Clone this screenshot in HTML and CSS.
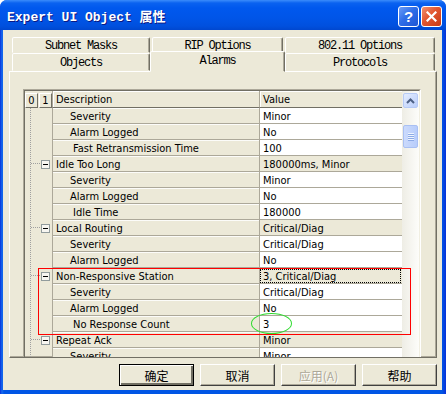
FILE: index.html
```html
<!DOCTYPE html>
<html lang="zh-CN">
<head>
  <meta charset="UTF-8">
  <title>Expert UI Object 属性</title>
  <link rel="stylesheet" href="styles.css">
</head>
<body>
  <div class="window">
    <div class="titlebar">
      <span class="title">Expert UI Object 属性</span>
      <div class="caption">
        <span class="cap-btn help">?</span>
        <span class="cap-btn close">
          <svg width="11" height="11" viewBox="0 0 11 11"><path d="M1.5 1.5 L9.5 9.5 M9.5 1.5 L1.5 9.5" stroke="#fff" stroke-width="2.2" stroke-linecap="square"/></svg>
        </span>
      </div>
    </div>
    <div class="client">
      <div class="tabs">
        <div class="tab-row back">
          <div class="tab w1">Subnet Masks</div>
          <div class="tab w2">RIP Options</div>
          <div class="tab w3">802.11 Options</div>
        </div>
        <div class="tab-row front">
          <div class="tab w1">Objects</div>
          <div class="tab active">Alarms</div>
          <div class="tab w3">Protocols</div>
        </div>
      </div>
      <div class="panel">
        <div class="grid">
          <div class="grid-body">
            <div class="rows">
              <div class="row head">
                <div class="tree"><span class="lvl">0</span><span class="lvl">1</span></div>
                <div class="desc">Description</div>
                <div class="val">Value</div>
              </div>
              <div class="row"><div class="tree"></div><div class="desc sub">Severity</div><div class="val">Minor</div></div>
              <div class="row"><div class="tree"></div><div class="desc sub">Alarm Logged</div><div class="val">No</div></div>
              <div class="row"><div class="tree"></div><div class="desc sub3">Fast Retransmission Time</div><div class="val">100</div></div>
              <div class="row group"><div class="tree"><span class="minus"></span></div><div class="desc">Idle Too Long</div><div class="val">180000ms, Minor</div></div>
              <div class="row"><div class="tree"></div><div class="desc sub">Severity</div><div class="val">Minor</div></div>
              <div class="row"><div class="tree"></div><div class="desc sub">Alarm Logged</div><div class="val">No</div></div>
              <div class="row"><div class="tree"></div><div class="desc sub3">Idle Time</div><div class="val">180000</div></div>
              <div class="row group"><div class="tree"><span class="minus"></span></div><div class="desc">Local Routing</div><div class="val">Critical/Diag</div></div>
              <div class="row"><div class="tree"></div><div class="desc sub">Severity</div><div class="val">Critical/Diag</div></div>
              <div class="row"><div class="tree"></div><div class="desc sub">Alarm Logged</div><div class="val">No</div></div>
              <div class="row group"><div class="tree"><span class="minus"></span></div><div class="desc">Non-Responsive Station</div><div class="val focus">3, Critical/Diag</div></div>
              <div class="row"><div class="tree"></div><div class="desc sub">Severity</div><div class="val">Critical/Diag</div></div>
              <div class="row"><div class="tree"></div><div class="desc sub">Alarm Logged</div><div class="val">No</div></div>
              <div class="row"><div class="tree"></div><div class="desc sub3">No Response Count</div><div class="val">3</div></div>
              <div class="row group"><div class="tree"><span class="minus"></span></div><div class="desc">Repeat Ack</div><div class="val">Minor</div></div>
              <div class="row"><div class="tree"></div><div class="desc sub">Severity</div><div class="val">Minor</div></div>
            </div>
            <div class="scrollbar">
              <div class="sb-btn">
                <svg width="9" height="6" viewBox="0 0 9 6"><path d="M1 5 L4.5 1.5 L8 5" fill="none" stroke="#4d6185" stroke-width="2"/></svg>
              </div>
              <div class="sb-thumb"><i></i><i></i><i></i><i></i></div>
            </div>
          </div>
          <div class="mark-box"></div>
          <div class="mark-ring"></div>
        </div>
      </div>
      <div class="buttons">
        <button class="btn default">确定</button>
        <button class="btn">取消</button>
        <button class="btn" disabled>应用(A)</button>
        <button class="btn">帮助</button>
      </div>
    </div>
  </div>
</body>
</html>
```

FILE: styles.css
```css
* { margin: 0; padding: 0; box-sizing: border-box; }
body {
  width: 446px;
  height: 394px;
  overflow: hidden;
  background: #fff;
  font-family: "DejaVu Sans", "Liberation Sans", sans-serif;
  font-stretch: condensed;
  font-size: 11px;
  color: #000;
}
.window {
  width: 446px;
  height: 394px;
  display: flex;
  flex-direction: column;
  background: linear-gradient(to right, #0831d9 0, #166aee 2px, #0055e5 4px, #0055e5 calc(100% - 4px), #0831d9 100%);
  border-radius: 7px 7px 0 0;
  overflow: hidden;
}
.titlebar {
  height: 30px;
  flex: none;
  display: flex;
  align-items: center;
  justify-content: space-between;
  padding: 0 4px 0 7px;
  background: linear-gradient(to bottom, #3b8cfb 0, #0a62f0 3px, #0058ee 8px, #0055e8 18px, #0050de 26px, #0047cf 30px);
}
.title {
  font-family: "Liberation Mono", "Noto Sans CJK SC", monospace;
  font-stretch: normal;
  font-weight: bold;
  font-size: 13px;
  color: #fff;
  text-shadow: 1px 1px #0a1883;
  padding-top: 1px;
}
.caption {
  display: flex;
  gap: 2px;
  margin-top: 2px;
}
.cap-btn {
  width: 21px;
  height: 21px;
  border: 1px solid #fff;
  border-radius: 3px;
  display: flex;
  align-items: center;
  justify-content: center;
  color: #fff;
}
.help {
  background: linear-gradient(135deg, #6a9cf6 0, #2f6ee8 45%, #1d55d4 100%);
  font: bold 15px "Liberation Sans", Arial, sans-serif;
}
.close {
  background: linear-gradient(135deg, #f09070 0, #e2552f 45%, #c73a14 100%);
}
.client {
  flex: 1;
  margin: 0 4px 4px 3px;
  background: #ece9d8;
  padding: 7px 5px 0 6px;
  display: flex;
  flex-direction: column;
}
.tabs {
  padding-left: 3px;
  font-family: "Liberation Mono", "DejaVu Sans Mono", monospace;
  font-stretch: normal;
  font-size: 12px;
  letter-spacing: -1.2px;
}
.tab-row { display: flex; }
.tab {
  background: #ece9d8;
  border: 1px solid;
  border-color: #fff #716f64 transparent #fff;
  box-shadow: inset -1px 0 #aca899;
  border-radius: 2px 2px 0 0;
  display: flex;
  align-items: center;
  justify-content: center;
}
.back .tab { height: 16px; margin-right: 2px; padding-top: 2px; }
.front .tab { height: 18px; padding-top: 1px; }
.w1 { width: 138px; }
.w2 { width: 131px; }
.w3 { width: 150px; }
.back .w3 { margin-right: 0; }
.front .tab.active {
  width: 135px;
  height: 21px;
  margin-top: -2px;
  margin-bottom: -1px;
  padding: 0 0 1px;
  position: relative;
  z-index: 1;
}
.panel {
  height: 287px;
  flex: none;
  border: 1px solid;
  border-color: #fff #716f64 #716f64 #fff;
  box-shadow: inset -1px -1px #aca899;
  padding: 17px 15px 0 13px;
  overflow: hidden;
}
.grid {
  position: relative;
  width: 398px;
  height: 290px;
  border: 1px solid;
  border-color: #aca899 #fff #fff #aca899;
}
.grid-body {
  display: flex;
  height: 100%;
  border: 1px solid;
  border-color: #716f64 #f1efe2 #f1efe2 #716f64;
}
.rows { width: 377px; flex: none; }
.row {
  display: flex;
  height: 16px;
  line-height: 17px;
  white-space: nowrap;
}
.tree {
  width: 27px;
  flex: none;
  display: flex;
  align-items: center;
  background: repeating-linear-gradient(to bottom, #a0a0a0 0 1px, transparent 1px 2px) 5px 0 / 1px 100% no-repeat;
}
.group .tree {
  background:
    repeating-linear-gradient(to bottom, #a0a0a0 0 1px, transparent 1px 2px) 5px 0 / 1px 100% no-repeat,
    repeating-linear-gradient(to right, #a0a0a0 0 1px, transparent 1px 2px) 6px 7px / 10px 1px no-repeat;
}
.minus {
  width: 9px;
  height: 9px;
  margin-left: 16px;
  border: 1px solid #919b9c;
  background: linear-gradient(#000, #000) center / 5px 1px no-repeat, #f7f6f1;
}
.desc {
  width: 207px;
  flex: none;
  border-left: 1px solid #aca899;
  border-bottom: 1px solid #aca899;
  box-shadow: inset 0 1px #fcfcf9;
  padding-left: 3px;
  background: #ece9d8;
}
.desc.sub { padding-left: 17px; }
.desc.sub3 { padding-left: 20px; }
.val {
  width: 143px;
  flex: none;
  border-left: 1px solid #aca899;
  border-bottom: 1px solid #aca899;
  padding-left: 3px;
  background: #fff;
}
.group .val { background: #ece9d8; }
.val.focus { outline: 1px dotted #000; outline-offset: -2px; }
.head { height: 17px; line-height: 18px; }
.head .tree { background: none; padding-top: 1px; line-height: 14px; }
.lvl {
  width: 13px;
  height: 15px;
  text-align: center;
  border: 1px solid;
  border-color: #fff #716f64 #716f64 #fff;
  background: #ece9d8;
}
.lvl + .lvl { margin-left: 1px; }
.head .desc, .head .val {
  background: #ece9d8;
  box-shadow: inset 1px 1px #fff;
  border-bottom-color: #716f64;
}
.scrollbar {
  width: 17px;
  flex: none;
  background: linear-gradient(to right, #eeede5, #fdfdfa);
  padding: 2px 1px 0;
}
.sb-btn {
  height: 15px;
  border: 1px solid #b7cbf6;
  border-radius: 2px;
  background: linear-gradient(135deg, #e3ecff, #bccffa);
  display: flex;
  align-items: center;
  justify-content: center;
}
.sb-thumb {
  height: 23px;
  margin-top: 17px;
  border: 1px solid #a9c0f3;
  border-radius: 2px;
  background: linear-gradient(to right, #cbdafc, #b8cdfb);
  display: flex;
  flex-direction: column;
  justify-content: center;
  align-items: center;
  gap: 1px;
}
.sb-thumb i {
  display: block;
  width: 6px;
  height: 1px;
  background: #eef4fe;
  box-shadow: 0 1px #8caae6;
}
.mark-box {
  position: absolute;
  left: 14px;
  top: 178px;
  width: 373px;
  height: 67px;
  border: 1px solid #f00;
}
.mark-ring {
  position: absolute;
  left: 227px;
  top: 223px;
  width: 41px;
  height: 21px;
  border: 1px solid #2fdc2f;
  border-radius: 50%;
}
.buttons {
  display: flex;
  justify-content: flex-end;
  gap: 6px;
  margin-top: 6px;
}
.btn {
  width: 75px;
  height: 22px;
  background: #ece9d8;
  border: 1px solid;
  border-color: #fff #404040 #404040 #fff;
  box-shadow: inset -1px -1px #aca899;
  font-family: "Noto Sans CJK SC", sans-serif;
  font-size: 12px;
  color: #000;
}
.btn.default {
  border: 1px solid #000;
  box-shadow: inset 1px 1px #fff, inset -2px -2px #716f64;
}
.btn:disabled {
  color: #aca899;
  text-shadow: 1px 1px #fff;
}
```
